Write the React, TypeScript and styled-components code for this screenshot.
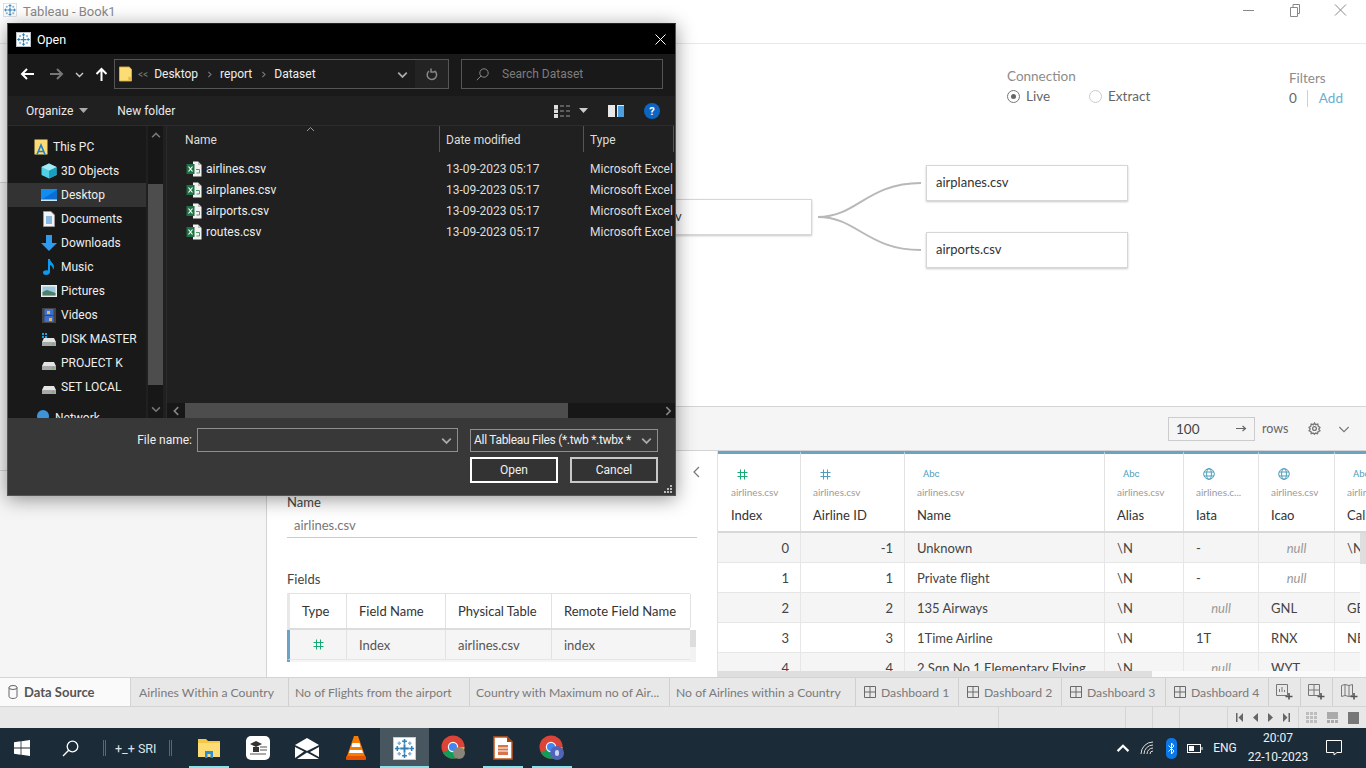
import React from "react";
import styled, { createGlobalStyle } from "styled-components";

const GlobalStyle = createGlobalStyle`
  html, body { margin: 0; padding: 0; width: 1366px; height: 768px; overflow: hidden; background: #fff; }
  * { box-sizing: border-box; }
`;

const Page = styled.div`
  width: 1366px;
  height: 768px;
  position: relative;
  display: flex;
  flex-direction: column;
  overflow: hidden;
  font-family: Lato, "Liberation Sans", sans-serif;
  color: #333;
`;

/* ---------- tableau window ---------- */
const TitleBar = styled.div`
  height: 44px;
  flex: none;
  display: flex;
  align-items: flex-start;
  padding: 3px 0 0 3px;
  border-bottom: 1px solid #e9e9e9;
`;
const AppTitle = styled.span`
  margin: 1px 0 0 6px;
  font: 13px/15px Roboto, sans-serif;
  color: #8a8a8a;
`;
const WinControls = styled.div`
  margin: -1px 0 0 auto;
  display: flex;
  gap: 30px;
  padding-right: 17px;
`;
const Body = styled.div`
  flex: 1;
  display: flex;
  min-height: 0;
`;
const Sidebar = styled.div`
  width: 267px;
  flex: none;
  display: flex;
  flex-direction: column;
  border-right: 1px solid #d4d4d4;
`;
const SideBlock = styled.div<{ $h?: number; $bg: string }>`
  height: ${(p) => (p.$h ? `${p.$h}px` : "auto")};
  flex: ${(p) => (p.$h ? "none" : "1")};
  background: ${(p) => p.$bg};
  border-bottom: ${(p) => (p.$h ? "1px solid #d4d4d4" : "none")};
`;
const Workspace = styled.div`
  flex: 1;
  display: flex;
  flex-direction: column;
  min-width: 0;
`;
const Canvas = styled.div`
  height: 363px;
  flex: none;
  position: relative;
  display: flex;
  padding: 24px 0 0 740px;
  border-bottom: 1px solid #d4d4d4;
`;
const ConnectionBlock = styled.div`
  width: 282px;
  flex: none;
`;
const FiltersBlock = styled.div`
  padding-top: 2px;
`;
const SectionLabel = styled.div`
  font-size: 13.5px;
  line-height: 16px;
  color: #8c8c8c;
`;
const RadioRow = styled.div`
  display: flex;
  align-items: center;
  height: 20px;
  margin-top: 2px;
  font-size: 13.5px;
  color: #666;
`;
const Radio = styled.span<{ $on?: boolean; $gap?: number }>`
  width: 13px;
  height: 13px;
  border-radius: 50%;
  border: 1px solid ${(p) => (p.$on ? "#777" : "#ccc")};
  display: flex;
  align-items: center;
  justify-content: center;
  margin-right: 6px;
  margin-left: ${(p) => p.$gap ?? 0}px;
  &::after {
    content: "";
    width: 5px;
    height: 5px;
    border-radius: 50%;
    background: ${(p) => (p.$on ? "#666" : "transparent")};
  }
`;
const FilterCount = styled.span`
  padding-right: 10px;
  border-right: 1px solid #d0d0d0;
  margin-right: 11px;
  line-height: 17px;
`;
const AddLink = styled.span`
  color: #6aaed0;
`;
const TableNode = styled.div<{ $x: number; $y: number }>`
  position: absolute;
  left: ${(p) => p.$x}px;
  top: ${(p) => p.$y}px;
  width: 202px;
  height: 36px;
  padding: 0 0 2px 9px;
  display: flex;
  align-items: center;
  background: #fff;
  border: 1px solid #d6d6d6;
  box-shadow: 0 1px 2px rgba(0, 0, 0, 0.22);
  font-size: 13px;
  color: #333;
`;
const Connector = styled.svg`
  position: absolute;
  left: 550px;
  top: 135px;
`;
const PreviewBar = styled.div`
  height: 43px;
  flex: none;
  display: flex;
  align-items: center;
  background: #f5f5f5;
  padding: 0 15px 0 901px;
  font-size: 12.5px;
  color: #666;
`;
const RowsInput = styled.div`
  width: 87px;
  height: 24px;
  display: flex;
  align-items: center;
  justify-content: space-between;
  padding: 0 7px;
  background: #f5f5f5;
  border: 1px solid #ccc;
  font-size: 13.5px;
  color: #444;
`;
const RowsLabel = styled.span`
  margin: 0 20px 0 7px;
`;
const ChevronGap = styled.span`
  margin-left: 17px;
  display: flex;
`;
const Lower = styled.div`
  flex: 1;
  display: flex;
  min-height: 0;
  border-top: 1px solid #d4d4d4;
`;
const MetaPanel = styled.div`
  width: 450px;
  flex: none;
  position: relative;
  padding: 43px 20px 0;
  overflow: hidden;
`;
const CollapseIcon = styled.svg`
  position: absolute;
  left: 425px;
  top: 15px;
`;
const MetaLabel = styled.div`
  font-size: 13px;
  line-height: 16px;
  color: #444;
`;
const NameField = styled.div`
  height: 22px;
  margin: 6px 0 33px;
  padding: 0 7px;
  width: 410px;
  border-bottom: 1px solid #ccc;
  font-size: 13px;
  line-height: 18px;
  color: #777;
`;
const FieldsTable = styled.div`
  margin-top: 6px;
  width: 409px;
  height: 69px;
  overflow: hidden;
  display: flex;
`;
const FieldRows = styled.div`
  width: 403px;
  flex: none;
`;
const FieldRow = styled.div<{ $head?: boolean }>`
  display: flex;
  height: ${(p) => (p.$head ? 37 : 30)}px;
  background: ${(p) => (p.$head ? "#fff" : "#f5f5f5")};
  border-top: ${(p) => (p.$head ? "1px solid #e2e2e2" : "none")};
  border-bottom: ${(p) => (p.$head ? "2px solid #dcdcdc" : "1px solid #e6e6e6")};
  border-left: 3px solid ${(p) => (p.$head ? "#e8e8e8" : "#6aa3c8")};
`;
const FieldCell = styled.div<{ $w: number; $head?: boolean; $center?: boolean }>`
  width: ${(p) => p.$w}px;
  flex: none;
  display: flex;
  align-items: center;
  justify-content: ${(p) => (p.$center ? "center" : "flex-start")};
  padding-left: ${(p) => (p.$center ? 0 : 12)}px;
  border-right: 1px solid #e2e2e2;
  font-size: 13px;
  color: ${(p) => (p.$head ? "#333" : "#555")};
`;
const FieldScroll = styled.div`
  width: 6px;
  margin-top: 37px;
  background: linear-gradient(#ddd 17px, #f2f2f2 17px);
`;

/* ---------- data grid ---------- */
const DataGrid = styled.div`
  flex: 1;
  min-width: 0;
  display: flex;
  flex-direction: column;
  overflow: hidden;
  border-left: 1px solid #e2e2e2;
`;
const GridHead = styled.div`
  height: 82px;
  flex: none;
  display: flex;
  border-bottom: 2px solid #d8d8d8;
`;
const HeadCell = styled.div<{ $w: number }>`
  width: ${(p) => p.$w}px;
  flex: none;
  border-top: 3px solid #6aa3c4;
  border-right: 1px solid #e2e2e2;
  padding: 13px 0 0 12px;
  overflow: hidden;
  white-space: nowrap;
  &:first-child { padding-left: 13px; }
  &:last-child { border-right: none; flex: 1; }
`;
const TypeGlyph = styled.div<{ $x: number; $color?: string }>`
  height: 14px;
  margin-left: ${(p) => p.$x}px;
  display: flex;
  align-items: center;
  font: 9.5px/14px Roboto, sans-serif;
  color: ${(p) => p.$color ?? "#4f9dba"};
`;
const SourceName = styled.div`
  margin-top: 5px;
  font-size: 10px;
  line-height: 12px;
  color: #9b9b9b;
`;
const ColumnName = styled.div`
  margin-top: 9px;
  font-size: 13px;
  line-height: 16px;
  color: #333;
`;
const GridBody = styled.div`
  flex: 1;
  display: flex;
  min-height: 0;
  overflow: hidden;
`;
const GridRows = styled.div`
  width: 642px;
  flex: none;
`;
const GridRow = styled.div<{ $alt: boolean }>`
  height: 30px;
  display: flex;
  background: ${(p) => (p.$alt ? "#f5f5f5" : "#fff")};
  border-bottom: 1px solid #e6e6e6;
`;
const GridCell = styled.div<{ $w: number; $kind: "num" | "text" | "null" }>`
  width: ${(p) => p.$w}px;
  flex: none;
  display: flex;
  align-items: center;
  overflow: hidden;
  white-space: nowrap;
  padding: 0 ${(p) => (p.$kind === "num" ? 11 : 0)}px 0 ${(p) => (p.$kind === "text" ? 12 : 0)}px;
  justify-content: ${(p) => (p.$kind === "num" ? "flex-end" : p.$kind === "null" ? "center" : "flex-start")};
  border-right: 1px solid #e6e6e6;
  font-size: 13px;
  font-style: ${(p) => (p.$kind === "null" ? "italic" : "normal")};
  color: ${(p) => (p.$kind === "null" ? "#999" : "#444")};
  &:last-child { border-right: none; }
`;
const GridVScroll = styled.div`
  flex: 1;
  background: linear-gradient(#dedede 31px, #fafafa 31px);
`;
const GridHScroll = styled.div`
  height: 6px;
  flex: none;
  background: linear-gradient(90deg, #dedede 434px, #fafafa 434px);
`;

/* ---------- sheet tabs and status ---------- */
const TabBar = styled.div`
  height: 30px;
  flex: none;
  display: flex;
  background: #e8e8e8;
  border-top: 1px solid #d4d4d4;
  border-bottom: 1px solid #d4d4d4;
`;
const DataSourceTab = styled.div`
  width: 131px;
  flex: none;
  display: flex;
  align-items: center;
  gap: 6px;
  padding-left: 8px;
  margin-right: 2px;
  background: #fafafa;
  border-right: 1px solid #d4d4d4;
  font-size: 13px;
  font-weight: 700;
  color: #555;
`;
const SheetTab = styled.div<{ $w: number }>`
  width: ${(p) => p.$w}px;
  flex: none;
  display: flex;
  align-items: center;
  gap: 5px;
  padding-left: ${(p) => (p.$w < 120 ? 8 : 6)}px;
  border-right: 1px solid #d0d0d0;
  font-size: 12.2px;
  white-space: nowrap;
  overflow: hidden;
  color: #7a7a7a;
`;
const AddTab = styled.div<{ $w: number }>`
  width: ${(p) => p.$w}px;
  flex: none;
  display: flex;
  align-items: center;
  justify-content: center;
  border-right: 1px solid #d0d0d0;
  &:last-child { border-right: none; }
`;
const StatusBar = styled.div`
  height: 21px;
  flex: none;
  display: flex;
  background: #e8e8e8;
`;
const StatusCell = styled.div<{ $w: number; $pad?: number }>`
  width: ${(p) => p.$w}px;
  flex: none;
  display: flex;
  align-items: center;
  justify-content: space-between;
  padding: 0 ${(p) => p.$pad ?? 0}px;
  border-right: 1px solid #d4d4d4;
  &:last-child { border-right: none; }
`;

/* ---------- windows taskbar ---------- */
const Taskbar = styled.div`
  height: 40px;
  flex: none;
  display: flex;
  align-items: stretch;
  background: #1b2b38;
  color: #fff;
`;
const TaskButton = styled.div<{ $w: number }>`
  width: ${(p) => p.$w}px;
  flex: none;
  display: flex;
  align-items: center;
  justify-content: center;
`;
const UserBand = styled.div`
  width: 88px;
  flex: none;
  display: flex;
  align-items: center;
  gap: 9px;
  padding-left: 7px;
  font: 12.5px Roboto, sans-serif;
  color: #dfe3e6;
`;
const UserName = styled.span`
  margin-right: 4px;
  white-space: nowrap;
`;
const BandBar = styled.span`
  width: 3px;
  height: 16px;
  flex: none;
  border-left: 1px solid #5a6770;
  border-right: 1px solid #5a6770;
`;
const AppSlot = styled.div<{ $active?: boolean }>`
  width: 49px;
  flex: none;
  position: relative;
  display: flex;
  align-items: center;
  justify-content: center;
  background: ${(p) => (p.$active ? "#47565f" : "transparent")};
  &::after {
    content: "";
    position: absolute;
    bottom: 0;
    height: 2px;
    left: ${(p) => (p.$active ? 0 : 5)}px;
    right: ${(p) => (p.$active ? 0 : 4)}px;
    background: #86e3ea;
  }
`;
const IdleSlot = styled.div`
  width: 49px;
  flex: none;
  display: flex;
  align-items: center;
  justify-content: center;
`;
const Tray = styled.div`
  margin-left: auto;
  display: flex;
  align-items: center;
  padding-right: 24px;
`;
const TrayItem = styled.div<{ $w: number }>`
  width: ${(p) => p.$w}px;
  flex: none;
  display: flex;
  justify-content: center;
  align-items: center;
  font: 12px Roboto, sans-serif;
  color: #f0f0f0;
`;
const Clock = styled.div`
  width: 70px;
  flex: none;
  text-align: center;
  font: 12px/19px Roboto, sans-serif;
  color: #f0f0f0;
  margin-right: 13px;
`;
const BtBadge = styled.span`
  width: 11px;
  height: 21px;
  border-radius: 5px;
  background: #0a78e6;
  display: flex;
  align-items: center;
  justify-content: center;
`;

/* ---------- open dialog ---------- */
const Dialog = styled.div`
  position: absolute;
  left: 7px;
  top: 23px;
  width: 669px;
  height: 473px;
  display: flex;
  flex-direction: column;
  background: #202020;
  border: 1px solid #555;
  border-top-color: #222;
  box-shadow: 0 3px 18px rgba(0, 0, 0, 0.42);
  font: 12px Roboto, sans-serif;
  color: #eee;
  z-index: 5;
`;
const DlgTitle = styled.div`
  height: 30px;
  flex: none;
  display: flex;
  align-items: center;
  padding: 0 9px 0 8px;
  background: #000;
  font-size: 12.5px;
  color: #fff;
`;
const DlgTitleText = styled.span`
  margin-left: 6px;
`;
const DlgClose = styled.svg`
  margin-left: auto;
`;
const AddressRow = styled.div`
  height: 42px;
  flex: none;
  display: flex;
  align-items: center;
  padding: 0 12px 2px 0;
  background: #191919;
`;
const NavButtons = styled.div`
  width: 106px;
  flex: none;
  display: flex;
  align-items: center;
  padding-left: 12px;
  gap: 5px;
`;
const AddressBox = styled.div`
  width: 335px;
  height: 30px;
  flex: none;
  display: flex;
  align-items: center;
  padding-left: 4px;
  gap: 6px;
  border: 1px solid #555;
  background: #1c1c1c;
`;
const Crumb = styled.span<{ $dim?: boolean }>`
  color: ${(p) => (p.$dim ? "#777" : "#eee")};
  font-size: ${(p) => (p.$dim ? 10 : 12)}px;
`;
const CrumbSep = styled.span`
  display: flex;
  margin: 0 1.5px;
`;
const AddressEnd = styled.div`
  margin-left: auto;
  height: 100%;
  display: flex;
  align-items: center;
`;
const DropZone = styled.div`
  width: 26px;
  display: flex;
  justify-content: center;
`;
const RefreshZone = styled.div`
  width: 33px;
  height: 100%;
  display: flex;
  align-items: center;
  justify-content: center;
  background: #232323;
`;
const SearchBox = styled.div`
  width: 202px;
  height: 30px;
  flex: none;
  margin-left: 12px;
  display: flex;
  align-items: center;
  padding-left: 14px;
  gap: 13px;
  border: 1px solid #555;
  color: #7d7d7d;
`;
const CommandRow = styled.div`
  height: 30px;
  flex: none;
  display: flex;
  align-items: center;
  padding: 0 15px 0 18px;
  background: #202020;
  border-bottom: 1px solid #2c2c2c;
  color: #e8e8e8;
`;
const Command = styled.span<{ $gap: number }>`
  display: flex;
  align-items: center;
  gap: 6px;
  margin-right: ${(p) => p.$gap}px;
`;
const CommandIcons = styled.div`
  margin-left: auto;
  display: flex;
  align-items: center;
`;
const DlgMain = styled.div`
  flex: 1;
  min-height: 0;
  display: flex;
`;
const NavPane = styled.div`
  width: 138px;
  flex: none;
  overflow: hidden;
  padding-top: 9px;
  background: #191919;
`;
const NavItem = styled.div<{ $selected?: boolean; $root?: boolean }>`
  height: 24px;
  display: flex;
  align-items: center;
  gap: ${(p) => (p.$root ? 5 : 4)}px;
  padding-left: ${(p) => (p.$root ? 26 : 33)}px;
  white-space: nowrap;
  background: ${(p) => (p.$selected ? "#333" : "transparent")};
`;
const NetworkItem = styled(NavItem)`
  margin-top: 7px;
`;
const IconBox = styled.span`
  width: 16px;
  flex: none;
  display: flex;
  justify-content: center;
`;
const NavScroll = styled.div`
  width: 15px;
  margin-left: 2px;
  flex: none;
  background: #171717;
  display: flex;
  flex-direction: column;
`;
const ScrollArrow = styled.div<{ $h?: number }>`
  height: ${(p) => p.$h ?? 15}px;
  flex: none;
  display: flex;
  align-items: center;
  justify-content: center;
`;
const NavThumb = styled.div`
  width: 15px;
  height: 201px;
  margin-top: 40px;
  margin-bottom: auto;
  background: #4d4d4d;
`;
const FilePane = styled.div`
  flex: 1;
  min-width: 0;
  display: flex;
  flex-direction: column;
  margin-left: 3px;
  border-left: 1px solid #2a2a2a;
  overflow: hidden;
`;
const FileHeader = styled.div`
  height: 26px;
  flex: none;
  position: relative;
  display: flex;
  color: #ddd;
`;
const FileHeadCell = styled.div<{ $w: number; $pad: number }>`
  width: ${(p) => p.$w}px;
  flex: none;
  display: flex;
  align-items: center;
  padding: 2px 0 0 ${(p) => p.$pad}px;
  border-right: 1px solid #555;
  &:last-child { border-right: none; }
`;
const SortMark = styled.svg`
  position: absolute;
  left: 139px;
  top: 0;
`;
const FileList = styled.div`
  flex: 1;
  padding-top: 6px;
`;
const FileRow = styled.div`
  height: 21px;
  display: flex;
  align-items: center;
  white-space: nowrap;
`;
const FileName = styled.div`
  width: 272px;
  flex: none;
  display: flex;
  align-items: center;
  gap: 4px;
  padding-left: 19px;
`;
const FileDate = styled.div`
  width: 144px;
  flex: none;
  padding-left: 7px;
  color: #ddd;
`;
const FileType = styled.div`
  padding-left: 7px;
  color: #ddd;
`;
const HScroll = styled.div`
  height: 15px;
  flex: none;
  display: flex;
  background: #171717;
`;
const HThumb = styled.div`
  width: 383px;
  margin-left: 3px;
  background: #4d4d4d;
`;
const HArrowEnd = styled.div`
  margin-left: auto;
  width: 15px;
  display: flex;
  align-items: center;
  justify-content: center;
`;
const DlgFooter = styled.div`
  height: 77px;
  flex: none;
  position: relative;
  display: flex;
  flex-direction: column;
  gap: 5px;
  padding: 10px 17px 0 0;
  background: #383838;
`;
const FooterLine = styled.div`
  display: flex;
  justify-content: flex-end;
  align-items: center;
  gap: 12px;
`;
const FileLabel = styled.span`
  margin-right: -7px;
  color: #f0f0f0;
`;
const ComboBox = styled.div<{ $w: number; $h: number }>`
  width: ${(p) => p.$w}px;
  height: ${(p) => p.$h}px;
  display: flex;
  align-items: center;
  justify-content: space-between;
  padding: 0 5px 0 3px;
  border: 1px solid #8e8e8e;
  white-space: nowrap;
  overflow: hidden;
  color: #f0f0f0;
`;
const ComboText = styled.span`
  letter-spacing: -0.3px;
`;
const DlgButton = styled.div<{ $primary?: boolean }>`
  width: 88px;
  height: 26px;
  display: flex;
  align-items: center;
  justify-content: center;
  border: 2px solid ${(p) => (p.$primary ? "#fff" : "#c8c8c8")};
  background: #333;
  color: #f0f0f0;
`;
const Grip = styled.svg`
  position: absolute;
  right: 2px;
  bottom: 1px;
`;
const Spacer = styled.span<{ $w: number }>`
  width: ${(p) => p.$w}px;
  flex: none;
`;

/* ---------- drawn icons ---------- */
const crossPath = (x: number, y: number, r: number) =>
  `M${x - r} ${y}H${x + r}M${x} ${y - r}V${y + r}`;

const TableauMark = ({ size, plate = true }: { size: number; plate?: boolean }) => (
  <svg width={size} height={size} viewBox="0 0 24 24">
    {plate && <rect x="0.5" y="0.5" width="23" height="23" fill="#fff" stroke="#c5ccd2" />}
    <g stroke="#2f7fb8" strokeWidth="1.6" fill="none">
      <path d={crossPath(12, 12, 4.5)} strokeWidth="2" />
      <path d={crossPath(12, 4.5, 2.5)} />
      <path d={crossPath(12, 19.5, 2.5)} />
      <path d={crossPath(4.5, 12, 2.5)} />
      <path d={crossPath(19.5, 12, 2.5)} />
      <path d={crossPath(6.5, 6.5, 1.8)} stroke="#7fb0d6" />
      <path d={crossPath(17.5, 6.5, 1.8)} stroke="#7fb0d6" />
      <path d={crossPath(6.5, 17.5, 1.8)} stroke="#7fb0d6" />
      <path d={crossPath(17.5, 17.5, 1.8)} stroke="#7fb0d6" />
    </g>
  </svg>
);

const HashIcon = ({ color, size = 11 }: { color: string; size?: number }) => (
  <svg width={size} height={size} viewBox="0 0 11 11" stroke={color} strokeWidth="1" fill="none">
    <path d="M3.5 0.5V10.5M7.5 0.5V10.5M0.5 3.5H10.5M0.5 7.5H10.5" />
  </svg>
);

const GlobeIcon = () => (
  <svg width="12" height="12" viewBox="0 0 12 12" stroke="#4f9dba" fill="none">
    <circle cx="6" cy="6" r="5.3" />
    <ellipse cx="6" cy="6" rx="2.4" ry="5.3" />
    <path d="M1 4H11M1 8H11" />
  </svg>
);

const ExcelIcon = () => (
  <svg width="16" height="16" viewBox="0 0 16 16">
    <path d="M7 0.5H12L15.5 4V15.5H7Z" fill="#f2f2f2" />
    <path d="M12 0.5L15.5 4H12Z" fill="#bdbdbd" />
    <rect x="0.5" y="3" width="8" height="10" fill="#1e7145" />
    <path d="M2.5 5.5L6.5 10.5M6.5 5.5L2.5 10.5" stroke="#fff" strokeWidth="1.2" />
    <path d="M10 8.5H13.5V12H10.5" stroke="#4e9a6c" fill="none" />
  </svg>
);

const FolderIcon = ({ w = 14, h = 16 }: { w?: number; h?: number }) => (
  <svg width={w} height={h} viewBox="0 0 14 16">
    <path d="M0.5 0.5H11L13.5 3V15.5H0.5Z" fill="#fbdc75" stroke="#d8b24b" />
    <path d="M10 11H13V15H10Z" fill="#e5b94c" />
  </svg>
);

const Chevron = ({ dir, color, size = 9, weight = 1.4 }: { dir: "up" | "down" | "left" | "right"; color: string; size?: number; weight?: number }) => {
  const d = {
    up: "M1 6.5L4.5 3L8 6.5",
    down: "M1 3L4.5 6.5L8 3",
    left: "M6.5 1L3 4.5L6.5 8",
    right: "M3 1L6.5 4.5L3 8",
  }[dir];
  return (
    <svg width={size} height={size} viewBox="0 0 9 9" fill="none" stroke={color} strokeWidth={weight}>
      <path d={d} />
    </svg>
  );
};

const Arrow = ({ dir, color }: { dir: "left" | "right" | "up"; color: string }) => {
  const d = {
    right: "M1 7H13M8 2L13 7L8 12",
    left: "M14 7H2M7 2L2 7L7 12",
    up: "M7.5 14V2M2.5 7L7.5 2L12.5 7",
  }[dir];
  return (
    <svg width="15" height="14" viewBox="0 0 15 14" fill="none" stroke={color} strokeWidth="2">
      <path d={d} />
    </svg>
  );
};

const DriveIcon = ({ squares }: { squares?: boolean }) => (
  <svg width="16" height="14" viewBox="0 0 16 14">
    {squares && <path d="M1 1H3V3H1ZM4 1H6V3H4ZM1 4H3V6H1ZM4 4H6V6H4Z" fill="#1ba1e2" />}
    <path d="M3 6H13L15 10H1Z" fill="#e4e4e4" />
    <rect x="1" y="10" width="14" height="4" fill="#a8a8a8" />
    <rect x="11" y="11.5" width="2" height="1" fill="#4caf50" />
  </svg>
);

const NavGlyph = ({ kind }: { kind: string }) => {
  switch (kind) {
    case "pc":
      return (
        <svg width="14" height="16" viewBox="0 0 14 16">
          <path d="M0.5 0.5H13.5V15.5H0.5Z" fill="#fbdc75" />
          <path d="M3 15.5L7 6L11 15.5M4.5 12.5H9.5" stroke="#1b7fd0" strokeWidth="1.6" fill="none" />
        </svg>
      );
    case "3d":
      return (
        <svg width="16" height="16" viewBox="0 0 16 16">
          <path d="M8 0.5L15.5 4V12L8 15.5L0.5 12V4Z" fill="#4fd0e6" />
          <path d="M8 7.5L15.5 4V12L8 15.5Z" fill="#1a9fc0" />
          <path d="M8 0.5L15.5 4L8 7.5L0.5 4Z" fill="#a3ecf5" />
        </svg>
      );
    case "desktop":
      return (
        <svg width="16" height="12" viewBox="0 0 16 12">
          <rect width="16" height="11" fill="#0f8df0" />
          <path d="M0 11L16 1V11Z" fill="#0a6fd0" />
          <rect x="0" y="10.5" width="16" height="1.5" fill="#cfe8fb" />
        </svg>
      );
    case "docs":
      return (
        <svg width="12" height="16" viewBox="0 0 12 16">
          <path d="M0.5 0.5H8L11.5 4V15.5H0.5Z" fill="#f4f4f4" stroke="#999" />
          <path d="M3 6H9M3 8H9M3 10H9M3 12H9" stroke="#1b7fd0" />
        </svg>
      );
    case "down":
      return (
        <svg width="16" height="16" viewBox="0 0 16 16">
          <path d="M5 0H11V8H16L8 16L0 8H5Z" fill="#2e9bee" />
        </svg>
      );
    case "music":
      return (
        <svg width="12" height="16" viewBox="0 0 12 16">
          <path d="M5 0H7C7 3 11 4 11 8C11 9 10.5 10 10 10.5C10 8 8.5 6.5 7 6V13C7 15 5 16 3 16C1 16 0 15 0 13.5C0 12 2 11 5 11.5Z" fill="#0e9af2" />
        </svg>
      );
    case "pics":
      return (
        <svg width="16" height="12" viewBox="0 0 16 12">
          <rect width="16" height="12" fill="#eee" />
          <rect x="1.5" y="1.5" width="13" height="9" fill="#9cc7dd" />
          <path d="M1.5 10.5V7L6 5L14.5 8V10.5Z" fill="#4d7f6a" />
        </svg>
      );
    case "video":
      return (
        <svg width="14" height="15" viewBox="0 0 14 15">
          <rect width="14" height="15" fill="#444" />
          <rect x="2.5" y="1" width="9" height="6" fill="#3d6fd0" />
          <rect x="2.5" y="8" width="9" height="6" fill="#3d6fd0" />
          <path d="M5 3H8V6H5ZM7 10H10V13H7Z" fill="#e5b94c" />
        </svg>
      );
    case "master":
      return <DriveIcon squares />;
    case "net":
      return (
        <svg width="16" height="16" viewBox="0 0 16 16">
          <circle cx="9" cy="6" r="6" fill="#3f94d8" />
          <rect x="0" y="10" width="14" height="3" fill="#7cc0ec" />
        </svg>
      );
    default:
      return <DriveIcon />;
  }
};

const DashIcon = () => (
  <svg width="12" height="12" viewBox="0 0 12 12" fill="none" stroke="#6a6a6a">
    <path d="M0.5 0.5H11.5V11.5H0.5ZM6 0.5V11.5M0.5 6H11.5" />
  </svg>
);

const AddSheetIcon = ({ kind }: { kind: "sheet" | "dash" | "story" }) => (
  <svg width="17" height="16" viewBox="0 0 17 16" fill="none" stroke="#777">
    {kind === "sheet" && <path d="M0.5 0.5H11.5V11.5H0.5ZM3.5 8V5M6 8V3M8.5 8V6" />}
    {kind === "dash" && <path d="M0.5 0.5H11.5V11.5H0.5ZM6 0.5V11.5M0.5 6H11.5" />}
    {kind === "story" && <path d="M0.5 1.5L4 0.5L8 1.5L11.5 0.5V11.5L8 12.5L4 11.5L0.5 12.5ZM4 0.5V11.5M8 1.5V12.5" />}
    <path d="M13 9V15.5M9.5 12.5H16.5" stroke="#555" strokeWidth="1.6" />
  </svg>
);

const Chrome = ({ badge }: { badge: "photo" | "letter" }) => (
  <svg width="26" height="26" viewBox="0 0 26 26">
    <circle cx="12" cy="12" r="11.5" fill="#db4437" />
    <path d="M12 12L2 18A11.5 11.5 0 0 0 17 22.4Z" fill="#0f9d58" />
    <path d="M12 12L23.5 12A11.5 11.5 0 0 1 17 22.4L12 12Z" fill="#f4b400" />
    <circle cx="12" cy="12" r="5.2" fill="#fff" />
    <circle cx="12" cy="12" r="4" fill="#4285f4" />
    {badge === "photo" ? (
      <circle cx="18" cy="18" r="6" fill="#8a8578" />
    ) : (
      <>
        <circle cx="18" cy="18" r="7" fill="#5165b8" />
        <rect x="16" y="15" width="4" height="6" rx="2" fill="#c9d2f0" />
      </>
    )}
  </svg>
);

/* ---------- data ---------- */
const navItems = [
  { kind: "3d", label: "3D Objects" },
  { kind: "desktop", label: "Desktop", selected: true },
  { kind: "docs", label: "Documents" },
  { kind: "down", label: "Downloads" },
  { kind: "music", label: "Music" },
  { kind: "pics", label: "Pictures" },
  { kind: "video", label: "Videos" },
  { kind: "master", label: "DISK MASTER" },
  { kind: "drive", label: "PROJECT K" },
  { kind: "drive", label: "SET LOCAL" },
];
const files = ["airlines.csv", "airplanes.csv", "airports.csv", "routes.csv"];

const columns = [
  { w: 83, name: "Index", src: "airlines.csv", glyph: "hashGreen", x: 6 },
  { w: 104, name: "Airline ID", src: "airlines.csv", glyph: "hash", x: 7 },
  { w: 200, name: "Name", src: "airlines.csv", glyph: "abc", x: 6 },
  { w: 79, name: "Alias", src: "airlines.csv", glyph: "abc", x: 6 },
  { w: 75, name: "Iata", src: "airlines.c...", glyph: "globe", x: 7 },
  { w: 76, name: "Icao", src: "airlines.csv", glyph: "globe", x: 7 },
  { w: 25, name: "Callsign", src: "airlines.csv", glyph: "abc", x: 6 },
];
const rows = [
  ["0", "-1", "Unknown", "\\N", "-", "null", "\\N"],
  ["1", "1", "Private flight", "\\N", "-", "null", ""],
  ["2", "2", "135 Airways", "\\N", "null", "GNL", "GE"],
  ["3", "3", "1Time Airline", "\\N", "1T", "RNX", "NE"],
  ["4", "4", "2 Sqn No 1 Elementary Flying...", "\\N", "null", "WYT", ""],
];
const sheets = [
  { w: 156, label: "Airlines Within a Country" },
  { w: 181, label: "No of Flights from the airport" },
  { w: 200, label: "Country with Maximum no of Air..." },
  { w: 186, label: "No of Airlines within a Country" },
];
const dashboards = [
  { w: 103, label: "Dashboard 1" },
  { w: 103, label: "Dashboard 2" },
  { w: 104, label: "Dashboard 3" },
  { w: 103, label: "Dashboard 4" },
];

const cellKind = (value: string, col: number): "num" | "text" | "null" => {
  if (col < 2) return "num";
  return value === "null" ? "null" : "text";
};

const glyphFor = (glyph: string) => {
  if (glyph === "hashGreen") return <HashIcon color="#19a974" />;
  if (glyph === "hash") return <HashIcon color="#4f9dba" />;
  if (glyph === "globe") return <GlobeIcon />;
  return "Abc";
};

export default function App() {
  return (
    <Page>
      <GlobalStyle />
      <TitleBar>
        <TableauMark size={14} />
        <AppTitle>Tableau - Book1</AppTitle>
        <WinControls>
          <svg width="16" height="16" viewBox="0 0 16 16" stroke="#888" fill="none"><path d="M2 8.5H13" /></svg>
          <svg width="16" height="16" viewBox="0 0 16 16" stroke="#888" fill="none"><path d="M3.5 5.5H10.5V14.5H3.5ZM6 5V2.5H12.5V11.5H10.5" /></svg>
          <svg width="16" height="16" viewBox="0 0 16 16" stroke="#888" fill="none"><path d="M2 2.5L13 13.5M13 2.5L2 13.5" /></svg>
        </WinControls>
      </TitleBar>

      <Body>
        <Sidebar>
          <SideBlock $h={139} $bg="#fff" />
          <SideBlock $h={288} $bg="#f5f5f5" />
          <SideBlock $bg="#f5f5f5" />
        </Sidebar>
        <Workspace>
          <Canvas>
            <ConnectionBlock>
              <SectionLabel>Connection</SectionLabel>
              <RadioRow>
                <Radio $on />
                Live
                <Radio $gap={39} />
                Extract
              </RadioRow>
            </ConnectionBlock>
            <FiltersBlock>
              <SectionLabel>Filters</SectionLabel>
              <RadioRow>
                <FilterCount>0</FilterCount>
                <AddLink>Add</AddLink>
              </RadioRow>
            </FiltersBlock>
            <TableNode $x={343} $y={155}>airlines.csv</TableNode>
            <Connector width="105" height="72" viewBox="0 0 105 72" fill="none" stroke="#b8b8b8" strokeWidth="2">
              <path d="M1 38C40 38 50 4 104 4" />
              <path d="M1 38C40 38 50 71 104 71" />
            </Connector>
            <TableNode $x={659} $y={121}>airplanes.csv</TableNode>
            <TableNode $x={659} $y={188}>airports.csv</TableNode>
          </Canvas>
          <PreviewBar>
            <RowsInput>
              100
              <svg width="11" height="9" viewBox="0 0 11 9" fill="none" stroke="#666" strokeWidth="1.2"><path d="M0 4.5H9M6.5 2L9.5 4.5L6.5 7" /></svg>
            </RowsInput>
            <RowsLabel>rows</RowsLabel>
            <svg width="13" height="13" viewBox="0 0 24 24" fill="none" stroke="#777" strokeWidth="2.5">
              <circle cx="12" cy="12" r="3.5" />
              <path d="M12 2L14 5L18 4L19 8L22 10L20 13L22 16L18.500 18L17.500 21.500L14 20.500L12 22.500L9.500 20.500L6 21.500L5.500 18L2 16L4 13L2 10L5 8L6 4L10 5Z" />
            </svg>
            <ChevronGap>
              <Chevron dir="down" color="#777" size={12} weight={0.8} />
            </ChevronGap>
          </PreviewBar>
          <Lower>
            <MetaPanel>
              <CollapseIcon width="9" height="12" viewBox="0 0 9 12" fill="none" stroke="#777" strokeWidth="1.2"><path d="M7 1L2 6L7 11" /></CollapseIcon>
              <MetaLabel>Name</MetaLabel>
              <NameField>airlines.csv</NameField>
              <MetaLabel>Fields</MetaLabel>
              <FieldsTable>
                <FieldRows>
                  <FieldRow $head>
                    <FieldCell $w={57} $head>Type</FieldCell>
                    <FieldCell $w={99} $head>Field Name</FieldCell>
                    <FieldCell $w={106} $head>Physical Table</FieldCell>
                    <FieldCell $w={139} $head>Remote Field Name</FieldCell>
                  </FieldRow>
                  <FieldRow>
                    <FieldCell $w={57} $center><HashIcon color="#19a974" /></FieldCell>
                    <FieldCell $w={99}>Index</FieldCell>
                    <FieldCell $w={106}>airlines.csv</FieldCell>
                    <FieldCell $w={139}>index</FieldCell>
                  </FieldRow>
                  <FieldRow />
                </FieldRows>
                <FieldScroll />
              </FieldsTable>
            </MetaPanel>
            <DataGrid>
              <GridHead>
                {columns.map((c) => (
                  <HeadCell key={c.name} $w={c.w}>
                    <TypeGlyph $x={c.x}>{glyphFor(c.glyph)}</TypeGlyph>
                    <SourceName>{c.src}</SourceName>
                    <ColumnName>{c.name}</ColumnName>
                  </HeadCell>
                ))}
              </GridHead>
              <GridBody>
                <GridRows>
                  {rows.map((r, i) => (
                    <GridRow key={r[0]} $alt={i % 2 === 0}>
                      {r.map((v, j) => (
                        <GridCell key={j} $w={columns[j].w} $kind={cellKind(v, j)}>{v}</GridCell>
                      ))}
                    </GridRow>
                  ))}
                </GridRows>
                <GridVScroll />
              </GridBody>
              <GridHScroll />
            </DataGrid>
          </Lower>
        </Workspace>
      </Body>

      <TabBar>
        <DataSourceTab>
          <svg width="10" height="14" viewBox="0 0 10 14" fill="none" stroke="#666"><ellipse cx="5" cy="2.500" rx="4" ry="2" /><path d="M1 2.500V11.500C1 12.600 3 13.500 5 13.500C7 13.500 9 12.600 9 11.500V2.500" /></svg>
          Data Source
        </DataSourceTab>
        {sheets.map((s) => (
          <SheetTab key={s.label} $w={s.w}>{s.label}</SheetTab>
        ))}
        {dashboards.map((d) => (
          <SheetTab key={d.label} $w={d.w}><DashIcon />{d.label}</SheetTab>
        ))}
        <AddTab $w={32}><AddSheetIcon kind="sheet" /></AddTab>
        <AddTab $w={32}><AddSheetIcon kind="dash" /></AddTab>
        <AddTab $w={33}><AddSheetIcon kind="story" /></AddTab>
      </TabBar>
      <StatusBar>
        <StatusCell $w={999} />
        <StatusCell $w={127} />
        <StatusCell $w={27} />
        <StatusCell $w={27} />
        <StatusCell $w={48} />
        <StatusCell $w={71} $pad={8}>
          <svg width="7" height="9" viewBox="0 0 7 9" fill="#666"><path d="M0 0H1.500V9H0ZM7 0V9L2.500 4.500Z" /></svg>
          <svg width="5" height="9" viewBox="0 0 5 9" fill="#666"><path d="M5 0V9L0 4.500Z" /></svg>
          <svg width="5" height="9" viewBox="0 0 5 9" fill="#666"><path d="M0 0V9L5 4.500Z" /></svg>
          <svg width="7" height="9" viewBox="0 0 7 9" fill="#666"><path d="M7 0H5.500V9H7ZM0 0V9L4.500 4.500Z" /></svg>
        </StatusCell>
        <StatusCell $w={67} $pad={7}>
          <svg width="11" height="11" viewBox="0 0 11 11" fill="#bdbdbd"><path d="M0 0H3V3H0ZM4 0H7V3H4ZM8 0H11V3H8ZM0 4H3V7H0ZM4 4H7V7H4ZM8 4H11V7H8ZM0 8H3V11H0ZM4 8H7V11H4ZM8 8H11V11H8Z" /></svg>
          <svg width="11" height="11" viewBox="0 0 11 11" fill="#aaa"><path d="M0 0H11V7H0ZM0 8H3V11H0ZM4 8H7V11H4ZM8 8H11V11H8Z" /></svg>
          <svg width="11" height="12" viewBox="0 0 11 12" fill="#777"><rect width="11" height="12" /></svg>
        </StatusCell>
      </StatusBar>

      <Taskbar>
        <TaskButton $w={44}>
          <svg width="16" height="16" viewBox="0 0 16 16" fill="#fff"><path d="M0 2.300L6.600 1.300V7.600H0ZM7.400 1.200L16 0V7.600H7.400ZM0 8.400H6.600V14.700L0 13.700ZM7.400 8.400H16V16L7.400 14.800Z" /></svg>
        </TaskButton>
        <TaskButton $w={52}>
          <svg width="17" height="17" viewBox="0 0 17 17" fill="none" stroke="#fff" strokeWidth="1.300"><circle cx="10.500" cy="6.500" r="5.300" /><path d="M6.700 10.300L1 16" /></svg>
        </TaskButton>
        <UserBand>
          <BandBar />
          <UserName>+_+ SRI</UserName>
          <BandBar />
        </UserBand>
        <AppSlot>
          <svg width="22" height="21" viewBox="0 0 22 21">
            <path d="M0 1H8L10 3H22V19H0Z" fill="#f6c744" />
            <rect y="5" width="22" height="14" fill="#fbdc75" />
            <path d="M7 13H15V20H12.500V16H9.500V20H7Z" fill="#2a8fd8" />
          </svg>
        </AppSlot>
        <IdleSlot>
          <svg width="24" height="24" viewBox="0 0 24 24">
            <rect width="24" height="24" rx="5" fill="#fff" />
            <path d="M4 8L10 5L16 8L10 11ZM7 11V16H13V11" fill="#333" />
            <path d="M14 11H21M14 14H21M4 18H20" stroke="#555" />
          </svg>
        </IdleSlot>
        <IdleSlot>
          <svg width="24" height="21" viewBox="0 0 24 21" fill="#fff">
            <path d="M12 0L24 7L12 13L0 7Z" />
            <path d="M0 9L9 13.500L0 20ZM2 21L12 14.500L24 21ZM24 9V19L15 14Z" />
          </svg>
        </IdleSlot>
        <IdleSlot>
          <svg width="20" height="24" viewBox="0 0 20 24">
            <path d="M8 0H12L19 20H1Z" fill="#f57c00" />
            <path d="M6.500 7H13.500L14.500 11H5.500ZM4 14H16L17 17H3Z" fill="#fff" />
            <rect y="20" width="20" height="4" rx="1" fill="#e65100" />
          </svg>
        </IdleSlot>
        <AppSlot $active>
          <TableauMark size={23} />
        </AppSlot>
        <IdleSlot><Chrome badge="photo" /></IdleSlot>
        <AppSlot>
          <svg width="20" height="24" viewBox="0 0 20 24">
            <path d="M1 1H14L19 6V23H1Z" fill="#fff" stroke="#c8561c" strokeWidth="1.500" />
            <path d="M14 0L20 6H14Z" fill="#a8430f" />
            <rect x="5" y="9" width="10" height="10" fill="#d9744a" />
            <path d="M5 12H15M5 15H15" stroke="#fff" />
          </svg>
        </AppSlot>
        <AppSlot><Chrome badge="letter" /></AppSlot>
        <Tray>
          <TrayItem $w={24}><Chevron dir="up" color="#fff" size={14} /></TrayItem>
          <TrayItem $w={24}>
            <svg width="14" height="14" viewBox="0 0 14 14" fill="none" stroke="#ddd"><path d="M1 13A12 12 0 0 1 13 1M4 13A9 9 0 0 1 13 4M7 13A6 6 0 0 1 13 7M10 13A3 3 0 0 1 13 10" /></svg>
          </TrayItem>
          <TrayItem $w={24}>
            <BtBadge>
              <svg width="7" height="13" viewBox="0 0 7 13" fill="none" stroke="#fff"><path d="M0.500 3.500L6 9L3.500 12V1L6 4L0.500 9.500" /></svg>
            </BtBadge>
          </TrayItem>
          <TrayItem $w={24}>
            <svg width="16" height="9" viewBox="0 0 16 9" fill="none" stroke="#fff"><rect x="0.500" y="0.500" width="13" height="8" /><rect x="2" y="2" width="5" height="5" fill="#fff" stroke="none" /><path d="M15 3V6" /></svg>
          </TrayItem>
          <TrayItem $w={36}>ENG</TrayItem>
          <Clock>20:07<br />22-10-2023</Clock>
          <TrayItem $w={16}>
            <svg width="16" height="16" viewBox="0 0 16 16" fill="none" stroke="#fff"><path d="M0.500 0.500H15.500V12.500H11L8 15L8 12.500H0.500Z" /></svg>
          </TrayItem>
        </Tray>
      </Taskbar>

      <Dialog>
        <DlgTitle>
          <TableauMark size={15} />
          <DlgTitleText>Open</DlgTitleText>
          <DlgClose width="11" height="11" viewBox="0 0 11 11" stroke="#fff" fill="none"><path d="M0.500 0.500L10.500 10.500M10.500 0.500L0.500 10.500" /></DlgClose>
        </DlgTitle>
        <AddressRow>
          <NavButtons>
            <Arrow dir="left" color="#fff" />
            <Spacer $w={4} />
            <Arrow dir="right" color="#777" />
            <Spacer $w={1} />
            <Chevron dir="down" color="#ccc" size={9} />
            <Spacer $w={0} />
            <Arrow dir="up" color="#fff" />
          </NavButtons>
          <AddressBox>
            <FolderIcon w={13} h={16} />
            <Crumb $dim>{"<<"}</Crumb>
            <Crumb>Desktop</Crumb>
            <CrumbSep><Chevron dir="right" color="#777" size={7} /></CrumbSep>
            <Crumb>report</Crumb>
            <CrumbSep><Chevron dir="right" color="#777" size={7} /></CrumbSep>
            <Crumb>Dataset</Crumb>
            <AddressEnd>
              <DropZone><Chevron dir="down" color="#aaa" size={11} /></DropZone>
              <RefreshZone>
                <svg width="12" height="13" viewBox="0 0 12 13" fill="none" stroke="#888" strokeWidth="1.500"><path d="M8.500 2.800A4.700 4.700 0 1 1 3 3M5 0.500V4H8.500" /></svg>
              </RefreshZone>
            </AddressEnd>
          </AddressBox>
          <SearchBox>
            <svg width="13" height="13" viewBox="0 0 13 13" fill="none" stroke="#888"><circle cx="8" cy="5" r="4.200" /><path d="M5 8L0.800 12.200" /></svg>
            Search Dataset
          </SearchBox>
        </AddressRow>
        <CommandRow>
          <Command $gap={29}>
            Organize
            <svg width="9" height="5" viewBox="0 0 9 5" fill="#aaa"><path d="M0 0H9L4.500 5Z" /></svg>
          </Command>
          <Command $gap={0}>New folder</Command>
          <CommandIcons>
            <svg width="16" height="14" viewBox="0 0 16 14" fill="none">
              <path d="M0 1H4V5H0ZM0 5.500H4V9H0ZM0 10H4V14H0Z" fill="#ddd" />
              <path d="M6 2H10M12 2H16M6 7H10M12 7H16M6 12H10M12 12H16" stroke="#999" />
            </svg>
            <Spacer $w={9} />
            <svg width="9" height="5" viewBox="0 0 9 5" fill="#ccc"><path d="M0 0H9L4.500 5Z" /></svg>
            <Spacer $w={20} />
            <svg width="16" height="12" viewBox="0 0 16 12">
              <rect width="16" height="12" fill="#e8e8e8" />
              <rect x="7" width="2" height="12" fill="#222" />
              <rect x="10" y="1" width="6" height="11" fill="#4d9fe0" />
            </svg>
            <Spacer $w={20} />
            <svg width="16" height="16" viewBox="0 0 16 16">
              <circle cx="8" cy="8" r="8" fill="#0a66c2" />
              <text x="8" y="12" textAnchor="middle" fontFamily="Roboto, sans-serif" fontWeight="700" fontSize="11" fill="#fff">?</text>
            </svg>
          </CommandIcons>
        </CommandRow>
        <DlgMain>
          <NavPane>
            <NavItem $root><NavGlyph kind="pc" />This PC</NavItem>
            {navItems.map((n) => (
              <NavItem key={n.label} $selected={n.selected}>
                <IconBox><NavGlyph kind={n.kind} /></IconBox>
                {n.label}
              </NavItem>
            ))}
            <NetworkItem $root><NavGlyph kind="net" />Network</NetworkItem>
          </NavPane>
          <NavScroll>
            <ScrollArrow $h={18}><Chevron dir="up" color="#777" size={10} /></ScrollArrow>
            <NavThumb />
            <ScrollArrow $h={18}><Chevron dir="down" color="#777" size={10} /></ScrollArrow>
          </NavScroll>
          <FilePane>
            <FileHeader>
              <FileHeadCell $w={273} $pad={18}>Name</FileHeadCell>
              <FileHeadCell $w={144} $pad={6}>Date modified</FileHeadCell>
              <FileHeadCell $w={90} $pad={6}>Type</FileHeadCell>
              <SortMark width="9" height="6" viewBox="0 0 9 6" fill="none" stroke="#999"><path d="M1 5L4.500 1.500L8 5" /></SortMark>
            </FileHeader>
            <FileList>
              {files.map((f) => (
                <FileRow key={f}>
                  <FileName><ExcelIcon />{f}</FileName>
                  <FileDate>13-09-2023 05:17</FileDate>
                  <FileType>Microsoft Excel</FileType>
                </FileRow>
              ))}
            </FileList>
            <HScroll>
              <ScrollArrow $h={15}><Spacer $w={4} /><Chevron dir="left" color="#888" size={10} /><Spacer $w={1} /></ScrollArrow>
              <HThumb />
              <HArrowEnd><Chevron dir="right" color="#888" size={10} /></HArrowEnd>
            </HScroll>
          </FilePane>
        </DlgMain>
        <DlgFooter>
          <FooterLine>
            <FileLabel>File name:</FileLabel>
            <ComboBox $w={261} $h={24}>
              <span />
              <Chevron dir="down" color="#aaa" size={11} />
            </ComboBox>
            <ComboBox $w={188} $h={23}>
              <ComboText>All Tableau Files (*.twb *.twbx *</ComboText>
              <Chevron dir="down" color="#aaa" size={11} />
            </ComboBox>
          </FooterLine>
          <FooterLine>
            <DlgButton $primary>Open</DlgButton>
            <DlgButton>Cancel</DlgButton>
          </FooterLine>
          <Grip width="10" height="10" viewBox="0 0 10 10" fill="#bbb"><path d="M7 1H9V3H7ZM4 4H6V6H4ZM7 4H9V6H7ZM1 7H3V9H1ZM4 7H6V9H4ZM7 7H9V9H7Z" /></Grip>
        </DlgFooter>
      </Dialog>
    </Page>
  );
}
